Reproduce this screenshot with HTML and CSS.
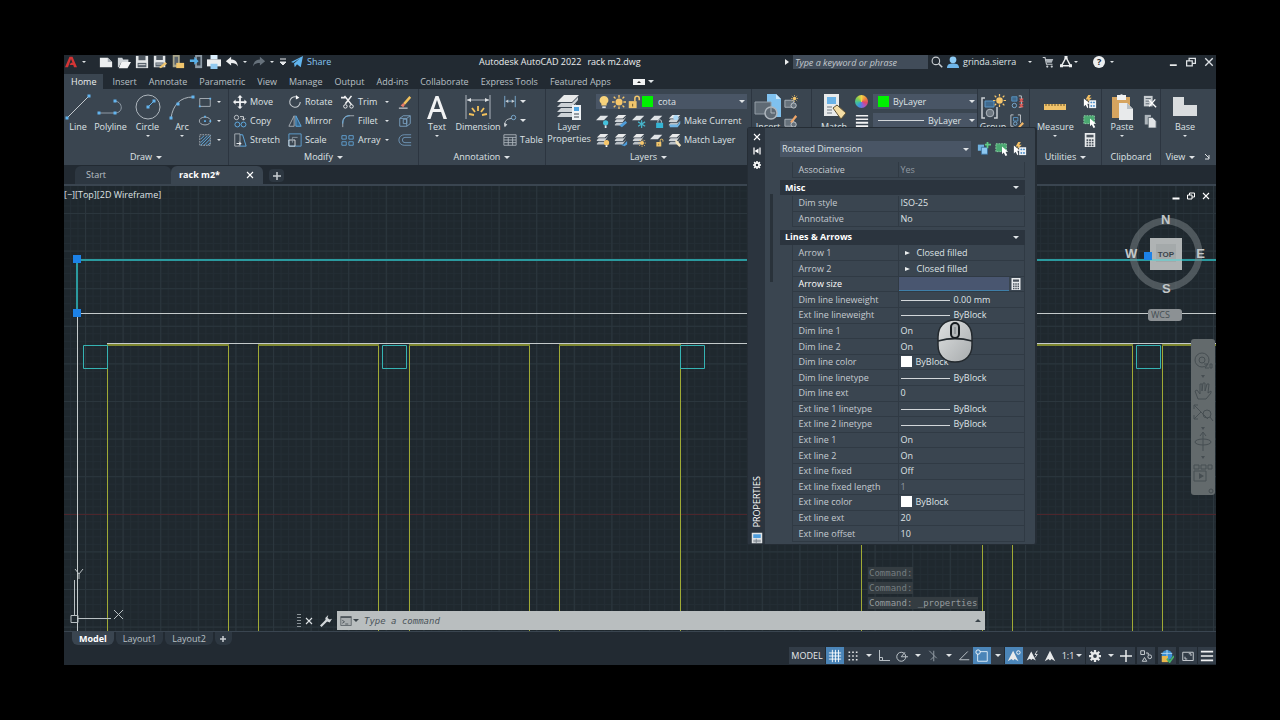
FILE: index.html
```html
<!DOCTYPE html>
<html lang="en">
<head>
<meta charset="utf-8">
<title>Autodesk AutoCAD 2022 - rack m2.dwg</title>
<link rel="stylesheet" href="styles.css">
</head>
<body>
<svg class="defs" aria-hidden="true">
  <symbol id="sheets" viewBox="0 0 16 16"><path d="M5 1h9l-4 4H1z" fill="#e8eaeb"/><path d="M1 8l2-2h8l3-3-4 6H1z" fill="#cfd4d8"/><path d="M1 12l2-2h8l3-3-4 6H1z" fill="#b9c0c6"/></symbol>
  <symbol id="sheet" viewBox="0 0 16 16"><path d="M5 2h9l-5 5H0z" fill="#dfe3e6"/></symbol>
  <symbol id="select-new" viewBox="0 0 16 16"><path d="M1 3h7v7H1z" fill="#6fb2e0"/><path d="M5 6h7v8H5z" fill="#8cc7f0" stroke="#3a6f9a"/><path d="M12 0v7M9 3h7" stroke="#5ecb84" stroke-width="2"/></symbol>
  <symbol id="select-pick" viewBox="0 0 16 16"><path d="M1 2h12v9H1z" fill="#4aa871" stroke="#8fd6a8" stroke-dasharray="2 1"/><path d="M8 5v9l2-2 2 4 2-1-2-4h3z" fill="#fff"/></symbol>
  <symbol id="select-quick" viewBox="0 0 16 16"><path d="M6 0L3 5h3L4 9l6-6H7l2-3z" fill="#f3bf63"/><path d="M1 4v9l2-2 2 4 1-1-1-4h3z" fill="#fff"/><path d="M7 6h8v9H7z" fill="#eef2f5"/><path d="M9 8h1v1H9zm3 0h1v1h-1zm-3 4h1v1H9zm3 0h1v1h-1z" fill="#4b8fca" stroke="#4b8fca"/></symbol>
  <symbol id="calc" viewBox="0 0 16 16"><path d="M2 0h12v16H2z" fill="#e7eaec"/><path d="M4 2h8v3H4z" fill="#4a535d"/><path d="M4 8h8M4 11h8M4 14h8" stroke="#4a535d" stroke-width="2" stroke-dasharray="2 1"/></symbol>
  <symbol id="bulb" viewBox="0 0 16 16"><path d="M8 1a5 5 0 0 0-3 9v2h6v-2a5 5 0 0 0-3-9z" fill="#f6d27c"/><path d="M6 13h4v2H6z" fill="#dfe3e6"/></symbol>
  <symbol id="sun" viewBox="0 0 16 16"><circle cx="8" cy="8" r="4" fill="#f6c66b"/><path d="M8 0v3M8 13v3M0 8h3M13 8h3M2 2l2 2M12 12l2 2M2 14l2-2M12 4l2-2" stroke="#f6c66b" stroke-width="1.500"/></symbol>
  <symbol id="lock" viewBox="0 0 16 16"><path d="M2 7h9v8H2z" fill="#f0c56c"/><path d="M9 7V4a2.500 2.500 0 0 1 5 0v2" fill="none" stroke="#f0c56c" stroke-width="1.800"/><path d="M6 10h1v3H6z" fill="#5a4a24"/></symbol>
  <symbol id="floppy" viewBox="0 0 16 16"><path d="M1 1h14v14H1z" fill="#e3e6e8"/><path d="M4 1h8v5H4z" fill="#4d565f"/><path d="M3 9h10v5H3z" fill="#59636d"/><path d="M4 11h8" stroke="#e3e6e8"/></symbol>
  <symbol id="cross" viewBox="0 0 16 16"><path d="M2 2l12 12M14 2L2 14" stroke="currentColor" stroke-width="2.200"/></symbol>
  <symbol id="restore" viewBox="0 0 16 16"><path d="M1 6h9v8H1zM5 6V2h10v8h-5" fill="none" stroke="currentColor" stroke-width="2"/></symbol>
  <symbol id="gear" viewBox="0 0 16 16"><path d="M8 0v4M8 12v4M0 8h4M12 8h4M2.300 2.300l3 3M10.700 10.700l3 3M13.700 2.300l-3 3M5.300 10.700l-3 3" stroke="currentColor" stroke-width="3"/><circle cx="8" cy="8" r="4" fill="none" stroke="currentColor" stroke-width="3"/></symbol>
  <symbol id="person" viewBox="0 0 16 16"><path d="M8 1l3 6 4 8-5-3-2 2-2-2-5 3 4-8z" fill="currentColor"/></symbol>
</svg>

<div class="app">
  <header class="titlebar">
    <div class="quick">
      <button class="logo" aria-label="Application menu"><svg class="i12" viewBox="0 0 16 16"><path d="M0 15L6 1h4l6 14h-4l-1-3H6l2-3h2L8 4 4 15z" fill="#d33535"/></svg></button>
      <span class="caret app-caret"></span>
      <button aria-label="New"><svg class="i14" viewBox="0 0 16 16"><path d="M1 3h9l5 5v6H1z" fill="#eceeef"/><path d="M10 3v5h5" fill="#aab1b8"/></svg></button>
      <button aria-label="Open"><svg class="i14" viewBox="0 0 16 16"><path d="M1 3h5l1 2h6v3H5l-3 6H1z" fill="#cfd4d8"/><path d="M5 8h11l-4 7H2z" fill="#f2f3f4"/></svg></button>
      <button aria-label="Save"><svg class="i14"><use href="#floppy"/></svg></button>
      <button aria-label="Save as"><svg class="i14" viewBox="0 0 16 16"><use href="#floppy" width="15" height="15"/><path d="M7 14l7-6 2 2-7 5z" fill="#f0c56c"/></svg></button>
      <button aria-label="Open from web"><svg class="i14" viewBox="0 0 16 16"><path d="M2 0h8v14H2z" fill="#a9a58a"/><path d="M4 2h4v9H4z" fill="#59636d"/><path d="M6 9h9v6H6z" fill="#f0c56c"/></svg></button>
      <button aria-label="Save to web"><svg class="i14" viewBox="0 0 16 16"><path d="M7 0h8v15H7z" fill="#8d9aa5"/><path d="M9 2h4v10H9z" fill="#37424d"/><path d="M1 5h5V2l5 5-5 4V8H1z" fill="#58b0e8"/></svg></button>
      <button aria-label="Plot"><svg class="i14" viewBox="0 0 16 16"><path d="M4 0h8v5H4z" fill="#d9edfa"/><path d="M0 5h16v8H0z" fill="#eceeef"/><path d="M4 10h8v6H4z" fill="#91c9ef"/></svg></button>
      <button aria-label="Undo"><svg class="i14" viewBox="0 0 16 16"><path d="M1 7l6-5v3c5 0 7 3 8 8-2-3-4-4-8-4v3z" fill="#eceeef"/></svg></button>
      <span class="caret tiny"></span>
      <button aria-label="Redo"><svg class="i14" viewBox="0 0 16 16"><path d="M15 7L9 2v3c-5 0-7 3-8 8 2-3 4-4 8-4v3z" fill="#66717b"/></svg></button>
      <span class="caret tiny"></span>
      <button class="custom" aria-label="Customize"><svg class="i8" viewBox="0 0 8 8"><path d="M1 1h6M1 4h6L4 7z" stroke="#e4e7e9" fill="#e4e7e9"/></svg></button>
      <button class="share"><svg class="i12" viewBox="0 0 16 16"><path d="M0 8L16 0l-3 15-5-4-3 4-1-5 8-7-9 6z" fill="#61b5ef"/></svg>Share</button>
    </div>
    <div class="doc-title"><span>Autodesk AutoCAD 2022</span><span>rack m2.dwg</span></div>
    <div class="account">
      <span class="side"></span>
      <input class="search" type="text" placeholder="Type a keyword or phrase" aria-label="Search">
      <button class="find" aria-label="Find"><svg class="i12" viewBox="0 0 16 16"><circle cx="6.500" cy="6.500" r="5" fill="none" stroke="#c9ced2" stroke-width="1.500"/><path d="M10 10l5 5" stroke="#c9ced2" stroke-width="2"/></svg></button>
      <button class="user"><svg class="i12" viewBox="0 0 16 16"><circle cx="8" cy="5" r="4.500" fill="#8dcbf5"/><path d="M0 16c0-5 3-6 8-6s8 1 8 6z" fill="#6fb6ea"/></svg>grinda.sierra</button>
      <span class="caret tiny"></span>
      <button class="cart" aria-label="Store"><svg class="i12" viewBox="0 0 16 16"><path d="M1 2h3l2 9h8" fill="none" stroke="#c9ced2" stroke-width="1.500"/><path d="M5 4h10l-2 5H6z" fill="#aeb5bb"/><circle cx="7" cy="14" r="1.500" fill="#c9ced2"/><circle cx="13" cy="14" r="1.500" fill="#c9ced2"/></svg></button>
      <button aria-label="Autodesk apps"><svg class="i12" viewBox="0 0 16 16"><path d="M8 2L2 13h12z" fill="none" stroke="#eceeef" stroke-width="2"/><path d="M6 0h4v4H6zM0 11h4v4H0zm12 0h4v4h-4z" fill="#eceeef"/></svg></button>
      <span class="caret tiny"></span>
      <button class="help" aria-label="Help"><b>?</b></button>
      <span class="caret tiny"></span>
      <span class="window-buttons">
        <button aria-label="Minimize"><svg class="i10" viewBox="0 0 16 16"><path d="M3 13h11" stroke="#fff" stroke-width="2.500"/></svg></button>
        <button aria-label="Restore"><svg class="i10"><use href="#restore"/></svg></button>
        <button aria-label="Close"><svg class="i10"><use href="#cross"/></svg></button>
      </span>
    </div>
  </header>

  <nav class="menu">
    <button class="on">Home</button><button>Insert</button><button>Annotate</button><button>Parametric</button><button>View</button><button>Manage</button><button>Output</button><button>Add-ins</button><button>Collaborate</button><button>Express Tools</button><button>Featured Apps</button>
    <button class="min-ribbon" aria-label="Minimize ribbon"><svg class="chip" viewBox="0 0 12 6"><path d="M0 0h12v6H0z" fill="#f1f2f3"/><path d="M4 4h4L6 2z" fill="#222"/></svg><span class="caret"></span></button>
  </nav>

  <section class="ribbon">
    <div class="panel">
      <div class="tools draw">
        <button class="big"><svg class="i28" viewBox="0 0 28 28"><path d="M3 25L25 3" stroke="#c3c9ce"/><path d="M1.500 23.500h3v3h-3zm22-22h3v3h-3z" fill="#62b4ee"/></svg>Line</button>
        <button class="big"><svg class="i28" viewBox="0 0 28 28"><path d="M2 20h16c9 0 8-12-1-12" fill="none" stroke="#8e9aa5"/><path d="M.5 18.500h3v3h-3zm16 0h3v3h-3zm0-12h3v3h-3z" fill="#62b4ee"/></svg>Polyline</button>
        <button class="big"><svg class="i28" viewBox="0 0 28 28"><circle cx="14" cy="14" r="12" fill="none" stroke="#aeb6bd"/><path d="M14 14l6-6" stroke="#62b4ee"/><path d="M12.500 12.500h3v3h-3zm6-6h3v3h-3z" fill="#62b4ee"/></svg>Circle<span class="caret"></span></button>
        <button class="big"><svg class="i28" viewBox="0 0 28 28"><path d="M3 25C5 12 12 4 25 4" fill="none" stroke="#aeb6bd"/><path d="M1.500 23.500h3v3h-3zm7-14h3v3h-3zm15-7h3v3h-3z" fill="#62b4ee"/></svg>Arc<span class="caret"></span></button>
        <div class="stack">
          <button aria-label="Rectangle"><svg class="i14" viewBox="0 0 16 16"><path d="M2 4h12v9H2z" fill="none" stroke="#aeb6bd"/><path d="M1 12h2v2H1zM13 3h2v2h-2z" fill="#62b4ee"/></svg><span class="caret"></span></button>
          <button aria-label="Ellipse"><svg class="i14" viewBox="0 0 16 16"><ellipse cx="8" cy="8" rx="6.500" ry="4.500" fill="none" stroke="#aeb6bd"/><path d="M7 7h2v2H7zm6 0h2v2h-2zM7 2h2v2H7z" fill="#62b4ee"/></svg><span class="caret"></span></button>
          <button aria-label="Hatch"><svg class="i14" viewBox="0 0 16 16"><path d="M2 2h12v12H2z" fill="none" stroke="#aeb6bd" stroke-dasharray="2 1"/><path d="M3 7l4-4M3 11l8-8M3 14L14 3M7 14l7-7M11 14l3-3" stroke="#62b4ee"/></svg><span class="caret"></span></button>
        </div>
      </div>
      <button class="name">Draw<span class="caret"></span></button>
    </div>

    <div class="panel">
      <div class="tools modify">
        <div class="stack">
          <button><svg class="i14" viewBox="0 0 16 16"><path d="M8 0l3 3H9v4h4V5l3 3-3 3V9H9v4h2l-3 3-3-3h2V9H3v2L0 8l3-3v2h4V3H5z" fill="#f1f2f3"/></svg>Move</button>
          <button><svg class="i14" viewBox="0 0 16 16"><circle cx="4" cy="4" r="2.500" fill="none" stroke="#c9ced2"/><circle cx="5" cy="12" r="2.800" fill="none" stroke="#62b4ee"/><circle cx="12" cy="12" r="2.800" fill="none" stroke="#62b4ee"/><path d="M8 3h4v4m-2-2l2 2 2-2" fill="none" stroke="#e1e4e6"/></svg>Copy</button>
          <button><svg class="i14" viewBox="0 0 16 16"><path d="M2 1h6v14H2z" fill="none" stroke="#aeb6bd"/><path d="M8 2h3l4 13H8" fill="none" stroke="#62b4ee"/><path d="M4 12h5m-2-2l2 2-2 2" fill="none" stroke="#fff"/></svg>Stretch</button>
        </div>
        <div class="stack">
          <button><svg class="i14" viewBox="0 0 16 16"><path d="M9 2a6 6 0 1 0 5 6" fill="none" stroke="#c9ced2" stroke-width="1.200"/><path d="M9 0v5l4-2z" fill="#fff"/></svg>Rotate</button>
          <button><svg class="i14" viewBox="0 0 16 16"><path d="M7 2v12H1z" fill="none" stroke="#aeb6bd"/><path d="M9 2v12h6z" fill="#35648a" stroke="#62b4ee"/></svg>Mirror</button>
          <button><svg class="i14" viewBox="0 0 16 16"><path d="M1 1h14v14H1z" fill="none" stroke="#62a5d8"/><path d="M1 8h7v7H1z" fill="none" stroke="#e1e4e6"/><path d="M5 11V5h6" fill="none" stroke="#8e9aa5"/></svg>Scale</button>
        </div>
        <div class="stack drop">
          <button><svg class="i14" viewBox="0 0 16 16"><path d="M4 1l8 10M12 1L5 10M0 3h5" stroke="#f1f2f3" stroke-width="1.800"/><circle cx="5" cy="13" r="2" fill="none" stroke="#fff"/><circle cx="12" cy="13" r="2" fill="none" stroke="#fff"/></svg>Trim<span class="caret"></span></button>
          <button><svg class="i14" viewBox="0 0 16 16"><path d="M2 15V9c0-4 3-7 7-7h6" fill="none" stroke="#aeb6bd"/><path d="M2 11c0-5 3-9 8-9" fill="none" stroke="#62b4ee"/></svg>Fillet<span class="caret"></span></button>
          <button><svg class="i14" viewBox="0 0 16 16"><path d="M1 3h5v4H1zm8 0h5v4H9zM1 10h5v4H1zm8 0h5v4H9z" fill="none" stroke="#62a5d8"/></svg>Array<span class="caret"></span></button>
        </div>
        <div class="stack">
          <button aria-label="Erase"><svg class="i14" viewBox="0 0 16 16"><path d="M6 9l7-8 2 2-7 8z" fill="#f3c25c"/><path d="M3 12l3-3 2 2-2 3z" fill="#e77b67"/><path d="M1 15h10" stroke="#fff"/></svg></button>
          <button aria-label="Explode"><svg class="i14" viewBox="0 0 16 16"><path d="M2 5h8v9H2zM2 5l4-3h8l-4 3M14 2v9l-4 3M6 6h4v5H6z" fill="none" stroke="#7da5c6"/></svg></button>
          <button aria-label="Offset"><svg class="i14" viewBox="0 0 16 16"><path d="M15 2H7a6 6 0 0 0 0 12h8M15 5H8a3 3 0 0 0 0 6h7" fill="none" stroke="#7199bb"/></svg></button>
        </div>
      </div>
      <button class="name">Modify<span class="caret"></span></button>
    </div>

    <div class="panel">
      <div class="tools annot">
        <button class="big"><svg class="i28" viewBox="0 0 28 28"><path d="M4 26L12.500 3h3L24 26h-3.500l-2.400-7H9.900l-2.400 7zM11 16h6L14 7z" fill="#f1f2f3" fill-rule="evenodd"/></svg>Text<span class="caret"></span></button>
        <button class="big"><svg class="i28" viewBox="0 0 28 28"><path d="M2 2v24M26 2v24M3 7h22" stroke="#aeb6bd"/><path d="M3 7l4-2v4zM25 7l-4-2v4z" fill="#e1e4e6"/><path d="M14 13v5M8 15l3 4M20 15l-3 4M5 21l5 1M23 21l-5 1" stroke="#f3c25c" stroke-width="1.800"/></svg>Dimension</button>
        <div class="stack">
          <button aria-label="Linear"><svg class="i14" viewBox="0 0 16 16"><path d="M2 1v13M14 1v13M3 7h10" stroke="#7fb2da"/><path d="M3 7l3-2v4zM13 7l-3-2v4z" fill="#c9ced2"/></svg><span class="caret"></span></button>
          <button aria-label="Leader"><svg class="i14" viewBox="0 0 16 16"><path d="M2 14c0-7 2-8 8-9" fill="none" stroke="#c9ced2"/><circle cx="12" cy="4" r="2.500" fill="none" stroke="#7fb2da"/><path d="M1 10l1 5 3-3z" fill="#c9ced2"/></svg><span class="caret"></span></button>
          <button><svg class="i14" viewBox="0 0 16 16"><path d="M1 2h14v12H1zM1 5h14M1 8h14M1 11h14M6 5v9M11 5v9" fill="none" stroke="#aeb6bd"/></svg>Table</button>
        </div>
      </div>
      <button class="name">Annotation<span class="caret"></span></button>
    </div>

    <div class="panel">
      <div class="tools layers">
        <button class="big two"><svg class="i28" viewBox="0 0 28 28"><path d="M9 2h15l-7 7H2z" fill="#e8eaeb"/><path d="M2 14l4-4h11l6-6v3l-6 7zM2 19l4-4h11l4-4v2l-4 6zM2 24l4-4h11v4z" fill="#cdd2d6"/><path d="M17 12h9v15h-9z" fill="#eef2f5"/><path d="M19 14h5v4h-5z" fill="#4ea3e0"/><path d="M19 21h5M19 24h5" stroke="#3c4650"/></svg>Layer<br>Properties</button>
        <div class="layer-grid">
          <label class="combo layer-combo"><svg class="i14"><use href="#bulb"/></svg><svg class="i14"><use href="#sun"/></svg><svg class="i14"><use href="#lock"/></svg><span class="swatch green"></span><select aria-label="Layer"><option>cota</option></select><span class="caret"></span></label>
          <div class="layer-row">
            <button aria-label="Off"><svg class="i14" viewBox="0 0 16 16"><use href="#sheet"/><circle cx="11" cy="10" r="3" fill="#45c1dc"/><path d="M10 13h2v3h-2z" fill="#dfe3e6"/></svg></button>
            <button aria-label="Isolate"><svg class="i14" viewBox="0 0 16 16"><use href="#sheets"/><path d="M6 13l7-5 2 2-6 5z" fill="#4e9ddb"/></svg></button>
            <button aria-label="Freeze"><svg class="i14" viewBox="0 0 16 16"><use href="#sheet"/><path d="M11 7v9M7 9l8 5M15 9l-8 5" stroke="#46b5cb" stroke-width="1.400"/></svg></button>
            <button aria-label="Lock"><svg class="i14" viewBox="0 0 16 16"><use href="#sheet"/><path d="M7 10h8v6H7z" fill="#35b4d4"/><path d="M9 10V8c0-2 4-2 4 0v2" fill="none" stroke="#c5ccd1"/></svg></button>
            <button class="wide"><svg class="i14" viewBox="0 0 16 16"><use href="#sheets"/><circle cx="9" cy="4" r="3" fill="#a9d7f5"/><path d="M2 12h9l3-4v3l-3 4H2z" fill="#70b5e6"/></svg>Make Current</button>
          </div>
          <div class="layer-row">
            <button aria-label="Turn all on"><svg class="i14" viewBox="0 0 16 16"><use href="#sheets"/><circle cx="12" cy="11" r="3" fill="#f6c66b"/><path d="M11 14h2v2h-2z" fill="#fff"/></svg></button>
            <button aria-label="Unisolate"><svg class="i14" viewBox="0 0 16 16"><use href="#sheets"/><path d="M7 13h4l4-4v4l-3 2z" fill="#4e9ddb"/></svg></button>
            <button aria-label="Thaw all"><svg class="i14" viewBox="0 0 16 16"><use href="#sheets"/><use href="#sun" x="7" y="7" width="9" height="9"/></svg></button>
            <button aria-label="Unlock"><svg class="i14" viewBox="0 0 16 16"><use href="#sheet"/><use href="#lock" x="6" y="6" width="10" height="10"/></svg></button>
            <button class="wide"><svg class="i14" viewBox="0 0 16 16"><use href="#sheets"/><path d="M8 8l3 1 4 5-2 2-4-4z" fill="#f2e3bd"/></svg>Match Layer</button>
          </div>
        </div>
      </div>
      <button class="name">Layers<span class="caret"></span></button>
    </div>

    <div class="panel">
      <div class="tools block">
        <button class="big"><svg class="i28" viewBox="0 0 28 28"><path d="M13 1h9l5 5v18H13z" fill="#7fc1ef"/><path d="M22 1v5h5z" fill="#c9e6fa"/><path d="M1 9h16v12H1z" fill="#5f6a74" stroke="#939da6"/><circle cx="17" cy="20" r="6" fill="#5f6a74" stroke="#aeb6bd" stroke-width="1.500"/><path d="M17 15v5h4" fill="none" stroke="#aeb6bd"/></svg>Insert</button>
        <div class="stack">
          <button aria-label="Create block"><svg class="i14" viewBox="0 0 16 16"><path d="M1 6h10v8H1z" fill="#66717b" stroke="#aeb6bd"/><circle cx="11" cy="12" r="3" fill="#66717b" stroke="#c9ced2"/><use href="#sun" x="8" y="0" width="8" height="8"/></svg></button>
          <button aria-label="Edit block"><svg class="i14" viewBox="0 0 16 16"><path d="M1 6h10v8H1z" fill="#66717b" stroke="#aeb6bd"/><circle cx="11" cy="12" r="3" fill="#66717b" stroke="#c9ced2"/><path d="M7 9l6-8 2 2-6 7z" fill="#f0a668"/></svg></button>
        </div>
      </div>
    </div>

    <div class="panel">
      <div class="tools props">
        <button class="big"><svg class="i28" viewBox="0 0 28 28"><path d="M4 1h15v22H4z" fill="#e8eaeb"/><path d="M7 4h9v7H7z" fill="#6ab2e6"/><path d="M7 14h5M7 17h5M7 20h5" stroke="#6d7780"/><path d="M13 15l4-3 9 8-5 6-3-4z" fill="#f4dda4" stroke="#5e5134"/></svg>Match</button>
        <div class="stack">
          <span class="cell"><span class="wheel"></span></span>
          <span class="cell"><svg class="i14" viewBox="0 0 16 16"><path d="M1 2h14M1 6h14" stroke="#f1f2f3" stroke-width="1.500"/><path d="M1 10h14M1 14h14" stroke="#f1f2f3" stroke-width="2.500"/></svg></span>
        </div>
        <div class="stack combos">
          <label class="combo"><span class="swatch green"></span><select aria-label="Object color"><option>ByLayer</option></select><span class="caret"></span></label>
          <label class="combo"><span class="rule"></span><select aria-label="Lineweight"><option>ByLayer</option></select><span class="caret"></span></label>
        </div>
      </div>
    </div>

    <div class="panel">
      <div class="tools group">
        <button class="big"><svg class="i28" viewBox="0 0 28 28"><path d="M6 5H3v20h3M15 25h3V14" fill="none" stroke="#c9ced2" stroke-width="1.500"/><path d="M6 8h9v6H6z" fill="#40698c" stroke="#5895c4"/><circle cx="11" cy="20" r="3.800" fill="#6d7780" stroke="#aeb6bd"/><use href="#sun" x="14" y="1" width="13" height="13"/></svg>Group</button>
        <div class="stack">
          <button aria-label="Ungroup"><svg class="i14" viewBox="0 0 16 16"><path d="M2 2h6v5H2z" fill="#40698c" stroke="#5895c4"/><circle cx="5" cy="12" r="2.500" fill="none" stroke="#7fb2da"/><path d="M10 1h3v13h-3" fill="none" stroke="#c9ced2"/><path d="M11 4l4 4M15 4l-4 4M11 10l4 4M15 10l-4 4" stroke="#e25550" stroke-width="1.300"/></svg></button>
          <button aria-label="Group edit"><svg class="i14" viewBox="0 0 16 16"><path d="M4 1H1v13h3M9 1h3v9" fill="none" stroke="#c9ced2"/><path d="M4 4h5v4H4z" fill="none" stroke="#5895c4"/><circle cx="6" cy="11" r="2" fill="none" stroke="#7fb2da"/><path d="M9 15l5-6 2 2-5 5z" fill="#f0b668"/></svg></button>
        </div>
      </div>
    </div>

    <div class="panel">
      <div class="tools util">
        <button class="big"><svg class="i28" viewBox="0 0 28 28"><path d="M3 11h22v6H3z" fill="#f1c36a"/><path d="M5 11v2m3-2v2m3-2v2m3-2v2m3-2v2m3-2v2m3-2v2" stroke="#6b5428"/></svg>Measure<span class="caret"></span></button>
        <div class="stack">
          <button aria-label="Quick select"><svg class="i14"><use href="#select-quick"/></svg></button>
          <button aria-label="Select all"><svg class="i14"><use href="#select-pick"/></svg></button>
          <button aria-label="Calculator"><svg class="i14"><use href="#calc"/></svg></button>
        </div>
      </div>
      <button class="name">Utilities<span class="caret"></span></button>
    </div>

    <div class="panel">
      <div class="tools clip">
        <button class="big"><svg class="i28" viewBox="0 0 28 28"><path d="M4 4h18v21H4z" fill="#d6a45f"/><path d="M9 2h3a2 2 0 0 1 3 0h3v5H9z" fill="#f1f2f3"/><path d="M11 10h8l6 6v11H11z" fill="#e8eaeb"/><path d="M19 10v6h6" fill="#b8c0c6"/></svg>Paste<span class="caret"></span></button>
        <div class="stack">
          <button aria-label="Cut"><svg class="i14" viewBox="0 0 16 16"><path d="M1 1h10v12H1z" fill="#c9ced2"/><path d="M3 4h6M3 7h5M3 10h4" stroke="#56616b"/><path d="M14 5l-7 8M7 6l8 8" stroke="#fff" stroke-width="1.500"/></svg></button>
          <button aria-label="Copy clip"><svg class="i14" viewBox="0 0 16 16"><path d="M2 1h7v11H2z" fill="#aeb5bb"/><path d="M6 4h5l4 4v8H6z" fill="#e1e4e6" stroke="#56616b"/></svg></button>
        </div>
      </div>
      <span class="name">Clipboard</span>
    </div>

    <div class="panel">
      <div class="tools view">
        <button class="big"><svg class="i28" viewBox="0 0 28 28"><path d="M2 4h11v8h13v11H2z" fill="#d9dcde"/></svg>Base<span class="caret"></span></button>
      </div>
      <button class="name">View<span class="caret"></span><svg class="i8 launch" viewBox="0 0 8 8"><path d="M2 1l4 4M6 2v4H2" stroke="#dfe3e6" fill="none"/></svg></button>
    </div>
  </section>

  <div class="doc-tabs">
    <button class="doc">Start</button>
    <button class="doc on">rack m2*<svg class="i8"><use href="#cross"/></svg></button>
    <button class="add" aria-label="New drawing"><svg class="i8" viewBox="0 0 8 8"><path d="M4 0v8M0 4h8" stroke="#c9ced2" stroke-width="1.500"/></svg></button>
  </div>

  <main class="canvas">
    <svg class="drawing" aria-label="Rack drawing">
      <defs>
        <pattern id="minor" width="7.520" height="7.520" patternUnits="userSpaceOnUse" patternTransform="translate(21 27)"><path d="M.5 0v8M0 .5h8" stroke="#232d34"/></pattern>
        <pattern id="major" width="37.600" height="37.600" patternUnits="userSpaceOnUse" patternTransform="translate(21 27)"><path d="M.5 0v38M0 .5h38" stroke="#2b363d"/></pattern>
      </defs>
      <rect width="100%" height="100%" fill="url(#minor)"/>
      <rect width="100%" height="100%" fill="url(#major)"/>
      <rect y="328" width="100%" height="1" fill="#4d262c"/>
      <g fill="#a0aa35">
        <rect x="43" y="158" width="1" height="300"/><rect x="164" y="158" width="1" height="300"/><rect x="194" y="158" width="1" height="300"/><rect x="314" y="158" width="1" height="300"/><rect x="345" y="158" width="1" height="300"/><rect x="465" y="158" width="1" height="300"/><rect x="495" y="158" width="1" height="300"/><rect x="616" y="158" width="1" height="300"/><rect x="797" y="158" width="1" height="300"/><rect x="918" y="158" width="1" height="300"/><rect x="948" y="158" width="1" height="300"/><rect x="1068" y="158" width="1" height="300"/><rect x="1098" y="158" width="1" height="300"/>
      </g>
      <g fill="#7e8730">
        <rect x="43" y="158" width="122" height="2"/><rect x="194" y="158" width="121" height="2"/><rect x="345" y="158" width="121" height="2"/><rect x="495" y="158" width="122" height="2"/><rect x="948" y="158" width="121" height="2"/><rect x="1098" y="158" width="100%" height="2"/>
      </g>
      <g fill="#c5cbcc"><rect x="13" y="127" width="100%" height="1"/><rect x="43" y="157" width="100%" height="1"/><rect x="13" y="127" width="1" height="400"/></g>
      <path d="M19.500 159.500h24v23h-24zM318.500 159.500h24v23h-24zM616.500 159.500h24v23h-24zM1072.500 159.500h24v23h-24z" fill="none" stroke="#35b3b3"/>
      <rect x="12" y="73" width="100%" height="2" fill="#2b9a9f"/><rect x="12" y="74" width="2" height="53" fill="#2b9a9f"/>
      <path d="M9 69h8v8H9zM9 123h8v8H9z" fill="#1c82e8"/>
      <g fill="none" stroke="#b9c0c3"><path d="M7 429.500h7v7H7zM10.500 429v-35M14 432.500h33M11 383l4 5 4-5M15 388v5M50 424l9 9M59 424l-9 9"/></g>
    </svg>
    <div class="viewport-label"><button>[−]</button><button>[Top]</button><button>[2D Wireframe]</button></div>
    <div class="viewport-buttons">
      <button aria-label="Minimize viewport"><svg class="i8" viewBox="0 0 16 16"><path d="M1 13h14" stroke="#fff" stroke-width="4"/></svg></button>
      <button aria-label="Restore viewport"><svg class="i8"><use href="#restore"/></svg></button>
      <button aria-label="Close viewport"><svg class="i8"><use href="#cross"/></svg></button>
    </div>
    <div class="cube">
      <svg viewBox="0 0 84 84" aria-hidden="true"><circle cx="42" cy="42" r="33" fill="none" stroke="#7d858a" stroke-opacity=".5" stroke-width="7"/><path d="M26 26h32v32H26z" fill="#afb3b4"/><path d="M32 32h20v18H32z" fill="#a4a9aa"/><path d="M26 48h32" stroke="#7cc5c6" stroke-width="2"/><path d="M20 40h8v8h-8z" fill="#1c82e8"/></svg>
      <b class="n">N</b><b class="e">E</b><b class="s">S</b><b class="w">W</b><button class="top">TOP</button>
    </div>
    <button class="wcs">WCS</button>
    <div class="navbar">
      <svg viewBox="0 0 24 156" aria-hidden="true"><g fill="none" stroke="#464e52"><circle cx="11" cy="21" r="7"/><circle cx="11" cy="21" r="3"/><path d="M13 25h4l-3 4h4M19 25v4h2v-4z"/><path d="M7 60l-3-8 2-1 3 4V45h2v7l1-8h2v8l2-7h2l-1 9 3-2v2l-5 6H9z"/><path d="M3 66l14 14M3 80l7-7M3 66v4M3 66h4M3 80v-4M3 80h4"/><circle cx="16" cy="75" r="4"/><path d="M19 78l3 4M12 94v18M9 97l3-4 3 4"/><ellipse cx="12" cy="103" rx="8" ry="3"/><path d="M3 126h5v4H3zm7 0h5v4h-5zm7 0h4v4h-4zM3 132h12v10H3z"/></g><path d="M8 134v6l5-3zM10 36h4l-2 3zM10 88h4l-2 3zM10 117h4l-2 3z" fill="#464e52"/><circle cx="20" cy="152" r="2" fill="none" stroke="#464e52"/></svg>
    </div>
    <div class="history"><span>Command:</span><span>Command:</span><span class="last">Command: _properties</span></div>
    <div class="command">
      <span class="grip"></span>
      <button aria-label="Close command line"><svg class="i8"><use href="#cross"/></svg></button>
      <button aria-label="Customize"><svg class="i12" viewBox="0 0 16 16"><path d="M1 15l8-8" stroke="#d3d7da" stroke-width="3"/><path d="M8 8l-1-4 4-4-1 4 3 2 3-1-3 5z" fill="#d3d7da"/></svg></button>
      <div class="entry"><svg class="i12" viewBox="0 0 16 16"><path d="M1 2h14v12H1z" fill="#a8adaf" stroke="#50585d"/><path d="M1 3h14" stroke="#50585d" stroke-width="2"/><path d="M3 7l3 2-3 2M7 12h4" fill="none" stroke="#39434a"/></svg><span class="caret dark"></span><input type="text" placeholder="Type a command" aria-label="Command"><span class="caret dark up"></span></div>
    </div>
  </main>

  <div class="layout-tabs"><button class="on">Model</button><button>Layout1</button><button>Layout2</button><button aria-label="New layout" class="plus"><svg class="i8" viewBox="0 0 8 8"><path d="M4 1v6M1 4h6" stroke="#c9ced2" stroke-width="1.500"/></svg></button></div>

  <footer class="status">
    <button class="model">MODEL</button>
    <button class="lit" aria-label="Grid"><svg class="i14" viewBox="0 0 16 16"><path d="M5 1v14M8.500 1v14M12 1v14M1 4.500h14M1 8h14M1 11.500h14" stroke="#fff"/></svg></button>
    <button aria-label="Snap"><svg class="i12" viewBox="0 0 16 16"><path d="M2 3h12M2 8h12M2 13h12" stroke="#e1e4e6" stroke-width="2.200" stroke-dasharray="2.200 2.700"/></svg></button><button class="arrow" aria-label="Snap options"><span class="caret"></span></button>
    <button aria-label="Ortho"><svg class="i12" viewBox="0 0 16 16"><path d="M2 0v14h14M2 10h4v4" fill="none" stroke="#bcc3c8" stroke-width="1.300"/></svg></button>
    <button aria-label="Polar"><svg class="i12" viewBox="0 0 16 16"><circle cx="7" cy="9" r="6" fill="none" stroke="#bcc3c8" stroke-width="1.300"/><path d="M7 9h9M7 9l5-6" stroke="#bcc3c8" stroke-width="1.300"/></svg></button><button class="arrow" aria-label="Polar options"><span class="caret"></span></button>
    <button aria-label="Isodraft"><svg class="i12" viewBox="0 0 16 16"><path d="M3 1l10 10M9 1v14M5 13l4-4" stroke="#929ba3" stroke-width="1.300"/></svg></button><button class="arrow" aria-label="Isodraft options"><span class="caret"></span></button>
    <button aria-label="Snap tracking"><svg class="i12" viewBox="0 0 16 16"><path d="M13 2L2 13h13" fill="none" stroke="#bcc3c8" stroke-width="1.300"/></svg></button>
    <button class="lit" aria-label="Object snap"><svg class="i14" viewBox="0 0 16 16"><path d="M3 3h11v11H3z" fill="none" stroke="#e8f3fc"/><circle cx="3.500" cy="3.500" r="2.500" fill="#4b85b8" stroke="#fff"/></svg></button><button class="arrow" aria-label="Object snap options"><span class="caret"></span></button>
    <button class="lit after" aria-label="Annotation visibility"><svg class="i14" viewBox="0 0 16 16"><use href="#person" width="14" height="16"/><circle cx="13" cy="4" r="2" fill="none" stroke="#fff"/></svg></button>
    <button aria-label="Auto scale"><svg class="i12" viewBox="0 0 16 16"><use href="#person" width="14" height="16"/><path d="M15 1l-3 5h3l-3 4" fill="none" stroke="#fff"/></svg></button>
    <button aria-label="Annotation scale"><svg class="i12"><use href="#person"/></svg></button>
    <button class="scale">1:1<span class="caret"></span></button>
    <button aria-label="Workspace"><svg class="i12"><use href="#gear"/></svg></button><button class="arrow" aria-label="Workspace options"><span class="caret"></span></button>
    <button aria-label="Annotation monitor"><svg class="i12" viewBox="0 0 16 16"><path d="M8 0v16M0 8h16" stroke="#e8eaeb" stroke-width="2"/></svg></button>
    <button aria-label="Isolate objects" class="spaced"><svg class="i12" viewBox="0 0 16 16"><path d="M1 1h5v5H1zM8 4h3v3" fill="none" stroke="#c9ced2" stroke-width="1.300"/><circle cx="13" cy="9" r="2.500" fill="none" stroke="#c9ced2" stroke-width="1.300"/><path d="M3 15l3-5 3 5z" fill="none" stroke="#c9ced2" stroke-width="1.300"/></svg></button>
    <button aria-label="Hardware acceleration" class="spaced"><svg class="i14" viewBox="0 0 16 16"><circle cx="8" cy="7" r="6" fill="#3b8ed0"/><path d="M1 5h13M8 1v12" stroke="#b8dcf6"/><path d="M2 8h7v7H2z" fill="#e9b84d"/><path d="M8 11l3 4 5-7" fill="none" stroke="#48b06a" stroke-width="2"/></svg></button>
    <button aria-label="Clean screen" class="spaced"><svg class="i12" viewBox="0 0 16 16"><path d="M1 3h14v11H1zM4 12V9m0 3h3M12 5v3m0-3H9" fill="none" stroke="#c9ced2" stroke-width="1.300"/></svg></button>
    <button aria-label="Customization"><svg class="i14" viewBox="0 0 16 16"><path d="M1 3h14M1 8h14M1 13h14" stroke="#f1f2f3" stroke-width="1.800"/></svg></button>
  </footer>

  <aside class="palette">
    <div class="spine">
      <button aria-label="Close palette"><svg class="i8"><use href="#cross"/></svg></button>
      <button aria-label="Auto-hide"><svg class="i8" viewBox="0 0 16 16"><path d="M2 1v14M14 1v14" stroke="#fff" stroke-width="2.500"/><path d="M3 8l8-5v10z" fill="#fff"/></svg></button>
      <button aria-label="Palette options"><svg class="i8"><use href="#gear"/></svg></button>
      <span class="spine-name">PROPERTIES</span>
      <svg class="i12" viewBox="0 0 16 16"><path d="M1 1h14v14H1z" fill="#e1e4e6"/><path d="M3 3h10v5H3z" fill="#4e9ddb"/><path d="M3 11h10M3 13h10M7 9v6" stroke="#6d7780"/></svg>
    </div>
    <div class="track"></div>
    <div class="sheet">
      <div class="picker">
        <label class="combo"><select aria-label="Object type"><option>Rotated Dimension</option></select><span class="caret"></span></label>
        <button aria-label="Toggle pickadd"><svg class="i14"><use href="#select-new"/></svg></button>
        <button aria-label="Select objects"><svg class="i14"><use href="#select-pick"/></svg></button>
        <button aria-label="Quick select"><svg class="i14"><use href="#select-quick"/></svg></button>
      </div>
      <table class="properties">
        <colgroup><col class="indent"><col class="key"><col></colgroup>
        <tbody>
        <tr><td></td><th scope="row">Associative</th><td class="dim">Yes</td></tr>
        <tr class="head"><th colspan="3"><button>Misc<span class="caret"></span></button></th></tr>
        <tr><td></td><th scope="row">Dim style</th><td>ISO-25</td></tr>
        <tr><td></td><th scope="row">Annotative</th><td>No</td></tr>
        <tr class="head"><th colspan="3"><button>Lines &amp; Arrows<span class="caret"></span></button></th></tr>
        <tr><td></td><th scope="row">Arrow 1</th><td><span class="head-icon"></span>Closed filled</td></tr>
        <tr><td></td><th scope="row">Arrow 2</th><td><span class="head-icon"></span>Closed filled</td></tr>
        <tr class="active"><td></td><th scope="row"><label for="arrow-size">Arrow size</label></th><td><div class="edit"><input id="arrow-size" type="text"><svg class="i12"><use href="#calc"/></svg></div></td></tr>
        <tr><td></td><th scope="row">Dim line lineweight</th><td><span class="rule"></span>0.00 mm</td></tr>
        <tr><td></td><th scope="row">Ext line lineweight</th><td><span class="rule"></span>ByBlock</td></tr>
        <tr><td></td><th scope="row">Dim line 1</th><td>On</td></tr>
        <tr><td></td><th scope="row">Dim line 2</th><td>On</td></tr>
        <tr><td></td><th scope="row">Dim line color</th><td><span class="swatch"></span>ByBlock</td></tr>
        <tr><td></td><th scope="row">Dim line linetype</th><td><span class="rule"></span>ByBlock</td></tr>
        <tr><td></td><th scope="row">Dim line ext</th><td>0</td></tr>
        <tr><td></td><th scope="row">Ext line 1 linetype</th><td><span class="rule"></span>ByBlock</td></tr>
        <tr><td></td><th scope="row">Ext line 2 linetype</th><td><span class="rule"></span>ByBlock</td></tr>
        <tr><td></td><th scope="row">Ext line 1</th><td>On</td></tr>
        <tr><td></td><th scope="row">Ext line 2</th><td>On</td></tr>
        <tr><td></td><th scope="row">Ext line fixed</th><td>Off</td></tr>
        <tr><td></td><th scope="row">Ext line fixed length</th><td class="dim">1</td></tr>
        <tr><td></td><th scope="row">Ext line color</th><td><span class="swatch"></span>ByBlock</td></tr>
        <tr><td></td><th scope="row">Ext line ext</th><td>20</td></tr>
        <tr><td></td><th scope="row">Ext line offset</th><td>10</td></tr>
        </tbody>
      </table>
    </div>
    <svg class="mouse" viewBox="0 0 36 44" aria-hidden="true"><defs><linearGradient id="shell" x2="1" y2="1"><stop offset="0" stop-color="#dfe1e1"/><stop offset="1" stop-color="#a7abad"/></linearGradient></defs><path d="M18 1C7 1 1 8 1 18v8c0 10 6 17 17 17s17-7 17-17v-8C35 8 29 1 18 1z" fill="url(#shell)" stroke="#23292e" stroke-width="1.500"/><path d="M1 22q17-5 34 0" fill="none" stroke="#23292e" stroke-width="1.800"/><rect x="14" y="4" width="8" height="15" rx="4" fill="#b5b9bb" stroke="#171c20" stroke-width="2"/><path d="M18 8v7" stroke="#8d9294" stroke-width="1.500"/></svg>
  </aside>
</div>
</body>
</html>
```
FILE: styles.css
```css
* { box-sizing: border-box; }
body { margin: 0; min-height: 100vh; padding: 55px 64px; display: flex; background: #000; color: #dfe3e6; font: 9px/12px "Open Sans", "Noto Sans", sans-serif; }
button, input, select { font: inherit; color: inherit; background: none; border: 0; padding: 0; margin: 0; }
button { display: flex; align-items: center; justify-content: center; white-space: nowrap; }
select { appearance: none; min-width: 0; flex: 1; }
svg { display: block; flex: none; }
.defs { position: absolute; width: 0; height: 0; }
.i8 { width: 8px; height: 8px; }
.i10 { width: 10px; height: 10px; }
.i12 { width: 12px; height: 12px; }
.i14 { width: 14px; height: 14px; }
.i28 { width: 28px; height: 28px; }
.caret { flex: none; width: 0; height: 0; border: 3px solid transparent; border-top-color: #dfe3e6; border-bottom: 0; }
.caret.tiny { border-width: 2px; border-bottom: 0; margin: 0 3px 0 2px; }
.caret.dark { border-top-color: #3b444a; }
.caret.up { border: 3px solid transparent; border-top: 0; border-bottom-color: #3b444a; }

.app { position: relative; flex: 1; min-width: 0; display: flex; flex-direction: column; background: #222a32; overflow: hidden; }

.titlebar { display: grid; grid-template-columns: 415px 1fr 431px; height: 19px; padding-bottom: 5px; align-items: center; }
.quick, .account { display: flex; align-items: center; }
.quick button { width: 18px; height: 14px; }
.quick .logo { width: 14px; }
.quick .app-caret { margin: 0 11px 0 4px; border-width: 2px; border-bottom: 0; }
.quick .custom { width: 12px; }
.quick .share { width: auto; gap: 4px; margin-left: 2px; color: #86c5f2; }
.doc-title { display: flex; gap: 6px; color: #eceeef; white-space: nowrap; }
.account { min-width: 0; }
.side { border: 3px solid transparent; border-left: 4px solid #eceeef; border-right: 0; margin: 0 4px 0 0; }
.search { width: 135px; height: 14px; padding: 0 2px; background: #414c59; font-style: italic; }
.search::placeholder { color: #c3c9ce; opacity: 1; }
.find { width: 17px; }
.user { gap: 4px; margin: 0 10px 0 2px; }
.cart { margin: 0 6px 0 7px; }
.help { width: 12px; height: 12px; border-radius: 50%; background: #eceeef; color: #222a32; margin-left: 12px; margin-right: 3px; }
.window-buttons { display: flex; gap: 8px; margin-left: auto; margin-right: 2px; }

.menu { display: flex; height: 15px; color: #b9c0c6; }
.menu button { padding: 0 6px; }
.menu .on { background: #3a4550; color: #eceeef; padding: 0 7px; margin-right: 3px; }
.menu .min-ribbon { margin-left: 10px; gap: 3px; }
.chip { width: 12px; height: 6px; }

.ribbon { display: grid; grid-template-columns: 165fr 190fr 127fr 206fr 60fr 166fr 52fr 72fr 59fr 55fr; height: 76px; background: #3a4550; }
.panel { min-width: 0; display: flex; flex-direction: column; padding-top: 3px; border-right: 1px solid #2c3540; overflow: hidden; }
.panel:last-child { border-right: 0; }
.tools { display: flex; height: 57px; }
.name { display: flex; align-items: center; justify-content: center; gap: 4px; height: 16px; }
.launch { margin-left: 4px; }
.big { flex-direction: column; justify-content: flex-start; line-height: 12px; padding-top: 1px; }
.big .caret { margin-top: 2px; border-width: 2px; border-bottom: 0; }
.stack { display: flex; flex-direction: column; }
.stack button, .stack .cell { height: 19px; gap: 3px; display: flex; align-items: center; justify-content: flex-start; }
.draw { display: grid; grid-template-columns: 28px 37px 37px 32px 1fr; }
.draw .stack .caret { margin-left: 2px; border-width: 2px; border-bottom: 0; }
.modify { display: grid; grid-template-columns: 55px 53px 57px 1fr; padding-left: 4px; }
.drop .caret { margin-left: auto; margin-right: 9px; border-width: 2px; border-bottom: 0; }
.drop button { width: 100%; }
.annot { display: grid; grid-template-columns: 32px 48px 1fr; padding-left: 2px; column-gap: 1px; }
.layers { padding: 0 4px 0 2px; gap: 6px; }
.two { width: 42px; white-space: normal; }
.layer-grid { flex: 1; min-width: 0; display: grid; grid-template-rows: repeat(3, 19px); align-items: center; }
.layer-row { display: flex; gap: 4px; }
.layer-row .wide { gap: 2px; }
.combo { display: flex; align-items: center; height: 15px; padding: 0 2px 0 3px; background: #495565; min-width: 0; }
.layer-combo { gap: 1px; padding-left: 1px; }
.swatch { flex: none; display: inline-block; width: 11px; height: 11px; background: #fff; vertical-align: top; margin-right: 4px; }
.swatch.green { background: #00f200; }
.rule { display: inline-block; width: 49px; height: 1px; background: #d3d7da; vertical-align: middle; margin-right: 4px; }
.block { padding-left: 2px; gap: 2px; }
.props { padding-left: 8px; gap: 4px; }
.props .stack:nth-child(2) { margin-left: 3px; }
.wheel { width: 13px; height: 13px; border-radius: 50%; background: conic-gradient(#f3d34a, #f08b3c, #e2456a, #9b59d0, #3f8fe0, #3fc0a0, #8ccf4a, #f3d34a); }
.combos { flex: 1; min-width: 0; gap: 4px; padding-top: 2px; }
.combos .combo { padding-left: 5px; }
.combos .rule { width: 46px; }
.group { padding-left: 1px; gap: 3px; }
.util { padding-left: 7px; gap: 9px; }
.clip { padding-left: 3px; gap: 4px; }
.clip .big { width: 34px; }
.view { padding-left: 7px; }
.view .big { width: 34px; }

.doc-tabs { display: flex; align-items: flex-end; height: 21px; padding-left: 11px; border-bottom: 2px solid #3a4550; }
.doc { height: 18px; width: 96px; padding-left: 11px; justify-content: flex-start; border-radius: 6px 6px 0 0; background: #2d3741; color: #b9c0c6; }
.doc.on { width: 92px; padding: 0 9px 0 8px; justify-content: space-between; background: #3a4550; color: #fff; font-weight: 700; }
.add { width: 15px; height: 13px; margin: 0 0 2px 6px; background: #2d3741; border-radius: 4px; }

.canvas { position: relative; flex: 1; min-height: 445px; background: #1f282e; overflow: hidden; }
.drawing { position: absolute; inset: 0; width: 100%; height: 100%; }
.viewport-label { position: relative; display: flex; padding-top: 3px; }
.viewport-buttons { position: absolute; top: 6px; right: 6px; display: flex; gap: 7px; color: #fff; }
.cube { position: absolute; top: 26px; right: 8px; width: 84px; height: 84px; color: #c3c7c9; font: 700 13px/14px "Liberation Sans", sans-serif; }
.cube svg { width: 84px; height: 84px; }
.cube b, .cube .top { position: absolute; }
.cube .n { top: 1px; left: 37px; }
.cube .s { bottom: 0; left: 38px; }
.cube .w { top: 35px; left: 1px; }
.cube .e { top: 35px; right: 3px; }
.cube .top { top: 36px; left: 26px; width: 32px; font-size: 8px; color: #3b444a; }
.wcs { position: absolute; top: 123px; right: 34px; width: 34px; height: 12px; padding-left: 3px; justify-content: flex-start; border-radius: 3px; background: #8c9194; color: #454e53; }
.navbar { position: absolute; top: 153px; right: 1px; width: 24px; height: 156px; border-radius: 3px; background: #636a6c; }
.navbar svg { width: 24px; height: 156px; }
.history { position: absolute; left: 804px; bottom: 22px; display: flex; flex-direction: column; align-items: flex-start; gap: 3px; font: 9px/12px "DejaVu Sans Mono", monospace; color: #757c80; }
.history span { padding: 0 1px; background: #343c41; }
.history .last { color: #959b9e; }
.command { position: absolute; left: 233px; right: 231px; bottom: 1px; height: 19px; display: flex; align-items: center; }
.command button { width: 15px; color: #dfe3e6; margin-right: 2px; }
.grip { width: 4px; height: 13px; background: repeating-linear-gradient(#8b9398 0 1px, transparent 1px 3px); }
.entry { flex: 1; height: 19px; margin-left: 2px; padding: 0 4px 0 3px; display: flex; align-items: center; gap: 1px; background: #b9bebf; color: #4b5459; font: italic 9px/12px "DejaVu Sans Mono", monospace; }
.entry input { flex: 1; min-width: 0; padding-left: 4px; }
.entry input::placeholder { color: #4b5459; opacity: 1; }

.layout-tabs { display: flex; height: 15px; padding-left: 8px; gap: 2px; border-top: 1px solid #3a4550; color: #b9c0c6; }
.layout-tabs button { height: 13px; padding: 0 7px; background: #2d3741; border-radius: 0 0 6px 6px; }
.layout-tabs .on { background: #3a4550; color: #fff; font-weight: 700; }
.layout-tabs .plus { width: 17px; padding: 0; }

.status { display: flex; justify-content: flex-end; height: 19px; padding-top: 1px; color: #e8eaeb; }
.status button { width: 18px; height: 17px; background: #323c47; }
.status .model { width: 36px; margin-right: 1px; }
.status .arrow { width: 13px; }
.status .lit { background: #4b85b8; }
.status .after { margin-left: 1px; }
.status .scale { width: 26px; gap: 2px; margin-right: 1px; }
.status .spaced { margin: 0 1px 0 2px; }

.palette { position: absolute; left: 683px; top: 72px; width: 290px; display: flex; background: #3a4550; border: 1px solid #252d35; border-right-width: 2px; border-radius: 3px; }
.spine { width: 17px; display: flex; flex-direction: column; align-items: center; gap: 5px; padding: 4px 0 0; background: #2b343e; color: #fff; }
.spine button { height: 9px; }
.spine-name { margin-top: auto; writing-mode: vertical-rl; transform: rotate(180deg); }
.track { width: 3px; height: 88px; margin: 66px 7px 0 5px; background: #29323a; }
.sheet { flex: 1; min-width: 0; padding: 13px 10px 2px 0; }
.picker { display: flex; align-items: center; gap: 4px; height: 16px; margin: 0 -8px 5px 0; }
.picker .combo { width: 191px; height: 16px; margin-right: 2px; padding-left: 2px; }
.properties { width: 100%; height: 380px; border-collapse: collapse; table-layout: fixed; }
.indent { width: 12px; }
.key { width: 106px; }
.properties tr { height: 15px; }
.properties td, .properties th { padding: 0 0 0 2px; border: 1px solid #303a44; border-width: 0 0 1px 1px; font-weight: 400; text-align: left; white-space: nowrap; line-height: 12px; }
.properties th { padding-left: 6px; color: #c5cbd0; }
.properties td:first-child { border: 0; }
.properties td:last-child { border-right-width: 1px; }
.properties .dim { color: #9099a1; }
.properties .head { height: 17px; }
.properties .head th { padding: 2px 0 0; border: 0; }
.head button { width: 100%; height: 15px; padding: 0 6px 0 5px; justify-content: space-between; background: #2b343e; color: #fff; font-weight: 700; }
.properties .active th { color: #fff; }
.properties .active td:last-child { padding: 0; }
.edit { display: flex; align-items: center; gap: 1px; padding-right: 2px; }
.edit input { flex: 1; min-width: 0; height: 14px; background: #495670; border-bottom: 1px solid #3f7fa8; }
.head-icon { display: inline-block; margin: 0 7px 0 4px; border: 2px solid transparent; border-left: 5px solid #eceeef; border-right: 0; vertical-align: middle; }
.mouse { position: absolute; left: 189px; top: 191px; width: 36px; height: 44px; }
```
